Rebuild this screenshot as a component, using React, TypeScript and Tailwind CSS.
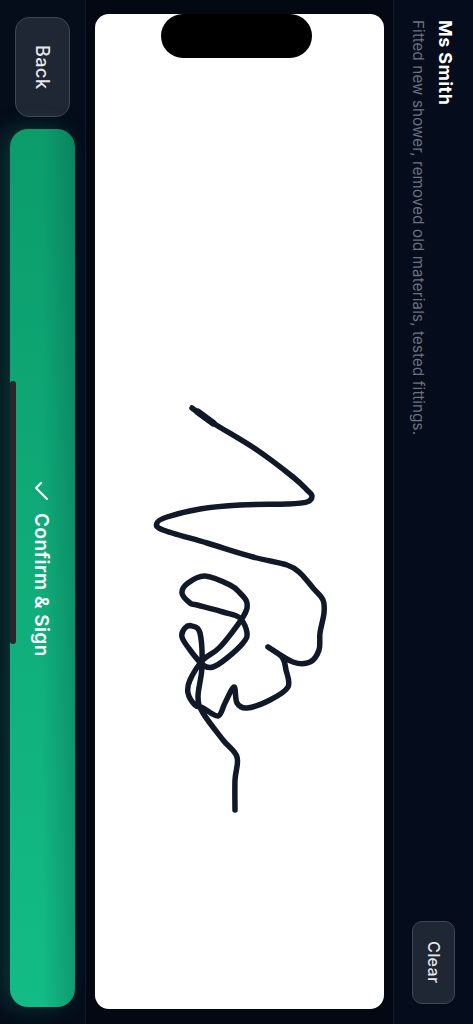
import { Check } from "lucide-react";

const pts: [number, number][] = [
  [192,408],[213,423],[257,450],[293,477],[307,490],[312,496],[307,502],[287,504],[240,505],[200,509],[167,517],[157,523],[163,530],[207,543],[253,557],[287,565],[300,573],[313,588],[323,600],[324,613],[320,633],[319,650],[310,662],[293,662],[268,647],[282,657],[286,670],[288,687],[270,700],[247,708],[237,703],[234,687],[225,703],[218,716],[203,708],[195,705],[188,693],[190,680],[203,660],[220,647],[243,617],[247,603],[240,593],[230,585],[205,576],[188,583],[182,593],[190,603],[197,605],[223,612],[240,618],[247,633],[243,643],[227,658],[213,667],[203,665],[190,650],[182,637],[185,628],[192,626],[200,633],[202,667],[198,697],[203,713],[223,740],[237,757],[235,780],[235,810],
];

function smooth(p: [number, number][]) {
  let d = `M${p[0][0]} ${p[0][1]}`;
  for (let i = 0; i < p.length - 1; i++) {
    const a = p[Math.max(0, i - 1)], b = p[i], c = p[i + 1], e = p[Math.min(p.length - 1, i + 2)];
    const k = 1 / 6;
    d += `C${b[0] + (c[0] - a[0]) * k} ${b[1] + (c[1] - a[1]) * k} ${c[0] - (e[0] - b[0]) * k} ${c[1] - (e[1] - b[1]) * k} ${c[0]} ${c[1]}`;
  }
  return d;
}

export default function App() {
  return (
    <div className="relative flex h-[1024px] w-[473px] overflow-hidden bg-[#040a17] font-['Inter',sans-serif]">
      <aside className="flex w-[86px] shrink-0 flex-col border-r border-[#111a28] bg-[#050c1a] pb-[17px] pl-[10px] pr-[10px] pt-[17px]">
        <button className="ml-[5px] flex h-[100px] w-[55px] items-center justify-center rounded-[14px] border border-[#3f4655] bg-[#1f2634] text-[18px] font-medium tracking-[0.5px] text-[#e5e7eb] [writing-mode:vertical-rl]">
          Back
        </button>
        <button className="mt-[12px] flex w-[65px] flex-1 items-center justify-center gap-[10px] rounded-[18px] bg-[linear-gradient(to_right,transparent_50%,rgba(4,70,60,0.28)),linear-gradient(to_bottom,#0c9c6c,#13bc85)] pr-[3px] text-[19px] font-semibold tracking-[0.45px] text-white shadow-[-8px_0_24px_rgba(16,185,129,0.25)] [writing-mode:vertical-rl]">
          <Check className="h-[24px] w-[24px] rotate-90" strokeWidth={2} />
          Confirm &amp; Sign
        </button>
      </aside>

      <main className="flex-1 bg-[#030813] px-[9px] pb-[15px] pt-[14px]">
        <div className="h-full w-full rounded-[14px] bg-white">
          <svg viewBox="95 14 289 995" className="block h-full w-full" fill="none">
            <path d={smooth(pts)} stroke="#111827" strokeWidth={5.5} strokeLinecap="round" strokeLinejoin="round" />
            <path d="M198 412 L213 423" stroke="#111827" strokeWidth={7} strokeLinecap="round" />
          </svg>
        </div>
      </main>

      <aside className="flex w-[80px] shrink-0 flex-col items-end justify-between border-l border-[#111a28] bg-[#050d1c] pb-[20px] pr-[18px] pt-[20px]">
        <div className="flex flex-col gap-[8px] [writing-mode:vertical-rl]">
          <p className="text-[18px] font-bold leading-[20px] tracking-[0.4px] text-white">Ms Smith</p>
          <p className="text-[15px] leading-[18px] tracking-[0.2px] text-[#6b7280]">Fitted new shower, removed old materials, tested fittings.</p>
        </div>
        <button className="flex h-[83px] w-[43px] items-center justify-center rounded-[10px] border border-[#3f4655] bg-[#1f2634] text-[16px] font-medium tracking-[0.4px] text-[#e5e7eb] [writing-mode:vertical-rl]">
          Clear
        </button>
      </aside>

      <div className="absolute left-[161px] top-[14px] h-[44px] w-[151px] rounded-full bg-black" />
      <div className="absolute left-[10px] top-[381px] h-[263px] w-[6px] rounded-full bg-[#272727]" />
    </div>
  );
}
